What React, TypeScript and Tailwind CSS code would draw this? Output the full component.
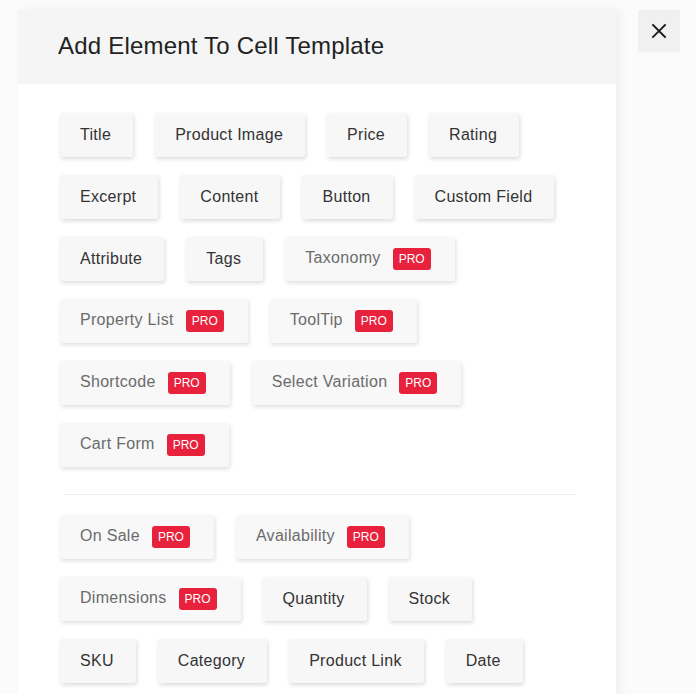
import React from "react";

type Item = { label: string; pro?: boolean };

const group1: Item[] = [
  { label: "Title" },
  { label: "Product Image" },
  { label: "Price" },
  { label: "Rating" },
  { label: "Excerpt" },
  { label: "Content" },
  { label: "Button" },
  { label: "Custom Field" },
  { label: "Attribute" },
  { label: "Tags" },
  { label: "Taxonomy", pro: true },
  { label: "Property List", pro: true },
  { label: "ToolTip", pro: true },
  { label: "Shortcode", pro: true },
  { label: "Select Variation", pro: true },
  { label: "Cart Form", pro: true },
];

const group2: Item[] = [
  { label: "On Sale", pro: true },
  { label: "Availability", pro: true },
  { label: "Dimensions", pro: true },
  { label: "Quantity" },
  { label: "Stock" },
  { label: "SKU" },
  { label: "Category" },
  { label: "Product Link" },
  { label: "Date" },
];

function Chip({ item }: { item: Item }) {
  if (item.pro) {
    return (
      <div className="h-[44px] flex items-center pl-5 pr-[24px] bg-[#f8f8f8] rounded-[2px] shadow-[1px_2px_4px_rgba(0,0,0,0.13)] text-[16px] tracking-[0.3px] text-[#6b6b6b]">
        <span className="leading-none -mt-[3px]">{item.label}</span>
        <span className="ml-[12px] h-[22px] px-[6px] flex items-center rounded-[3px] bg-[#e8213c] text-white text-[12px] tracking-normal leading-none">
          PRO
        </span>
      </div>
    );
  }
  return (
    <div className="h-[44px] flex items-center pl-5 pr-[22px] bg-[#f7f7f7] rounded-[2px] shadow-[1px_2px_4px_rgba(0,0,0,0.14)] text-[16px] tracking-[0.3px] text-[#333333]">
      <span className="leading-none">{item.label}</span>
    </div>
  );
}

export default function App() {
  return (
    <div
      className="w-[696px] h-[694px] overflow-hidden bg-[#fbfbfb] flex items-start"
      style={{ fontFamily: '"Liberation Sans", Arial, Helvetica, sans-serif' }}
    >
      <div className="ml-[18px] mt-[10px] w-[598px] flex flex-col shadow-[4px_0_10px_rgba(0,0,0,0.05)]">
        <div className="h-[74px] bg-[#f5f5f5] flex items-center pl-[40px]">
          <h1 className="text-[24px] tracking-[0.2px] text-[#222222] leading-none pb-[2px]">Add Element To Cell Template</h1>
        </div>
        <div className="bg-white pl-[42px] pr-[40px] pt-[29px] h-[620px]">
          <div className="flex flex-wrap gap-x-[22px] gap-y-[18px] pr-[10px]">
            {group1.map((it) => (
              <Chip key={it.label} item={it} />
            ))}
          </div>
          <div className="h-px bg-[#efefef] ml-[4px] mr-0 mt-[27px] mb-[20px]" />
          <div className="flex flex-wrap gap-x-[22px] gap-y-[18px] pr-[10px]">
            {group2.map((it) => (
              <Chip key={it.label} item={it} />
            ))}
          </div>
        </div>
      </div>
      <button className="ml-[22px] mt-[10px] w-[42px] h-[42px] bg-[#f0f0f0] flex items-center justify-center">
        <svg width="16" height="16" viewBox="0 0 16 16" fill="none" stroke="#1a1a1a" strokeWidth="1.8" strokeLinecap="square">
          <path d="M2 2 L14 14 M14 2 L2 14" />
        </svg>
      </button>
    </div>
  );
}
